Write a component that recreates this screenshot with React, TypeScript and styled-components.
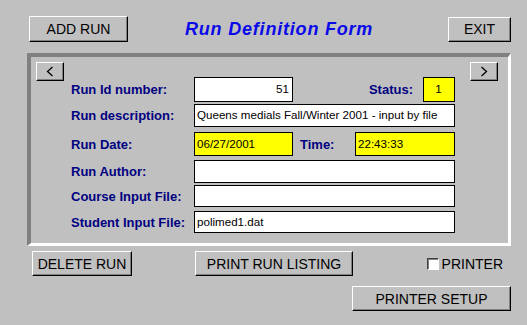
import React from "react";
import styled, { createGlobalStyle } from "styled-components";

const Global = createGlobalStyle`
  html, body { margin: 0; padding: 0; background: #c0c0c0; }
  body { width: 527px; height: 325px; overflow: hidden; font-family: "Liberation Sans", Arial, sans-serif; }
  #root { width: 527px; height: 325px; }
`;

const Page = styled.div`
  width: 527px;
  height: 325px;
  background: #c0c0c0;
  display: flex;
  flex-direction: column;
`;

const TopBar = styled.div`
  display: flex;
  align-items: center;
  padding: 16px 16px 0 29px;
  height: 26px;
`;

const Button = styled.button<{ $w: number; $h?: number }>`
  width: ${(p) => p.$w}px;
  height: ${(p) => p.$h ?? 25}px;
  box-sizing: border-box;
  background: #c0c0c0;
  border-style: solid;
  border-width: 1px;
  border-color: #ffffff #000000 #000000 #ffffff;
  box-shadow: inset -1px -1px 0 #808080;
  font-family: "Liberation Sans", Arial, sans-serif;
  font-size: 14px;
  color: #000;
  padding: 0;
  display: flex;
  align-items: center;
  justify-content: center;
  cursor: default;
  flex-shrink: 0;
`;

const Title = styled.h1`
  margin: 0 0 0 57px;
  font-family: "Liberation Sans", Arial, sans-serif;
  font-size: 18px;
  letter-spacing: 0.8px;
  font-weight: bold;
  font-style: italic;
  color: #0a0ae8;
`;

const Spacer = styled.div`
  flex: 1;
`;

const Panel = styled.div`
  margin: 11px 0 0 27px;
  width: 484px;
  box-sizing: border-box;
  border-style: solid;
  border-width: 4px 3px 3px 4px;
  border-color: #808080 #ffffff #ffffff #808080;
  display: flex;
`;

const NavCol = styled.div<{ $pl: number; $pr: number }>`
  padding: 5px ${(p) => p.$pr}px 0 ${(p) => p.$pl}px;
`;

const Form = styled.div`
  display: grid;
  grid-template-columns: 123px 261px;
  padding: 20px 0 10px 0;
  margin-left: 7px;
  margin-right: 15px;
`;

const Label = styled.div<{ $h: number; $mt: number }>`
  height: ${(p) => p.$h}px;
  margin-top: ${(p) => p.$mt}px;
  display: flex;
  align-items: center;
  font-size: 13px;
  font-weight: bold;
  color: #000080;
  white-space: nowrap;
`;

const InlineLabel = styled.span<{ $ml: number }>`
  margin-left: ${(p) => p.$ml}px;
  font-size: 13px;
  font-weight: bold;
  color: #000080;
  white-space: nowrap;
`;

const Cell = styled.div<{ $h: number; $mt: number }>`
  height: ${(p) => p.$h}px;
  margin-top: ${(p) => p.$mt}px;
  display: flex;
  align-items: stretch;
`;

const Field = styled.div<{ $w?: number; $yellow?: boolean; $align?: string; $ml?: number }>`
  box-sizing: border-box;
  ${(p) => (p.$w ? `width: ${p.$w}px; flex-shrink: 0;` : "flex: 1;")}
  margin-left: ${(p) => p.$ml ?? 0}px;
  background: ${(p) => (p.$yellow ? "#ffff00" : "#ffffff")};
  border: 1px solid #000;
  font-size: 11.6px;
  color: #000;
  display: flex;
  align-items: center;
  justify-content: ${(p) => p.$align ?? "flex-start"};
  padding: 0 3px 2px 2px;
  white-space: nowrap;
  overflow: hidden;
`;

const Mid = styled.div`
  display: flex;
  align-items: center;
`;

const BottomRow = styled.div`
  display: flex;
  align-items: center;
  padding: 5px 24px 0 32px;
`;

const PrintBtn = styled(Button)`
  margin-left: 63px;
`;

const CheckLabel = styled.label`
  margin-left: auto;
  display: flex;
  align-items: center;
  font-size: 14px;
  color: #000;
`;

const Box = styled.span`
  width: 12px;
  height: 12px;
  box-sizing: border-box;
  background: #fff;
  border-style: solid;
  border-width: 1px;
  border-color: #404040 #ffffff #ffffff #404040;
  box-shadow: inset 1px 1px 0 #808080;
  margin-right: 3px;
`;

const SetupRow = styled.div`
  display: flex;
  justify-content: flex-end;
  padding: 10px 16px 0 0;
`;

const Arrow = ({ dir }: { dir: "l" | "r" }) => (
  <svg width="8" height="11" viewBox="0 0 8 11">
    <polyline
      points={dir === "l" ? "6.5,1 1.5,5.5 6.5,10" : "1.5,1 6.5,5.5 1.5,10"}
      fill="none"
      stroke="#000"
      strokeWidth="1.3"
    />
  </svg>
);

const rows = [
  { label: "Run Id number:", h: 25, mt: 0 },
  { label: "Run description:", h: 23, mt: 2 },
  { label: "Run Date:", h: 24, mt: 5 },
  { label: "Run Author:", h: 23, mt: 4 },
  { label: "Course Input File:", h: 22, mt: 2 },
  { label: "Student Input File:", h: 22, mt: 4 },
];

export default function App() {
  return (
    <Page>
      <Global />
      <TopBar>
        <Button $w={99} $h={26}>ADD RUN</Button>
        <Title>Run Definition Form</Title>
        <Spacer />
        <Button $w={63}>EXIT</Button>
      </TopBar>
      <Panel>
        <NavCol $pl={5} $pr={0}>
          <Button $w={28} $h={19}><Arrow dir="l" /></Button>
        </NavCol>
        <Form>
          <Label $h={rows[0].h} $mt={rows[0].mt}>{rows[0].label}</Label>
          <Cell $h={rows[0].h} $mt={rows[0].mt}>
            <Field $w={99} $align="flex-end">51</Field>
            <Spacer />
            <Mid><InlineLabel $ml={0}>Status:</InlineLabel></Mid>
            <Field $w={32} $ml={10} $yellow $align="center">1</Field>
          </Cell>

          <Label $h={rows[1].h} $mt={rows[1].mt}>{rows[1].label}</Label>
          <Cell $h={rows[1].h} $mt={rows[1].mt}>
            <Field>Queens medials Fall/Winter 2001 - input by file</Field>
          </Cell>

          <Label $h={rows[2].h} $mt={rows[2].mt}>{rows[2].label}</Label>
          <Cell $h={rows[2].h} $mt={rows[2].mt}>
            <Field $w={99} $yellow>06/27/2001</Field>
            <Mid><InlineLabel $ml={7}>Time:</InlineLabel></Mid>
            <Spacer />
            <Field $w={100} $yellow>22:43:33</Field>
          </Cell>

          <Label $h={rows[3].h} $mt={rows[3].mt}>{rows[3].label}</Label>
          <Cell $h={rows[3].h} $mt={rows[3].mt}>
            <Field />
          </Cell>

          <Label $h={rows[4].h} $mt={rows[4].mt}>{rows[4].label}</Label>
          <Cell $h={rows[4].h} $mt={rows[4].mt}>
            <Field />
          </Cell>

          <Label $h={rows[5].h} $mt={rows[5].mt}>{rows[5].label}</Label>
          <Cell $h={rows[5].h} $mt={rows[5].mt}>
            <Field>polimed1.dat</Field>
          </Cell>
        </Form>
        <NavCol $pl={0} $pr={10}>
          <Button $w={28} $h={19}><Arrow dir="r" /></Button>
        </NavCol>
      </Panel>
      <BottomRow>
        <Button $w={100}>DELETE RUN</Button>
        <PrintBtn $w={158}>PRINT RUN LISTING</PrintBtn>
        <CheckLabel>
          <Box />
          PRINTER
        </CheckLabel>
      </BottomRow>
      <SetupRow>
        <Button $w={159}>PRINTER SETUP</Button>
      </SetupRow>
    </Page>
  );
}
